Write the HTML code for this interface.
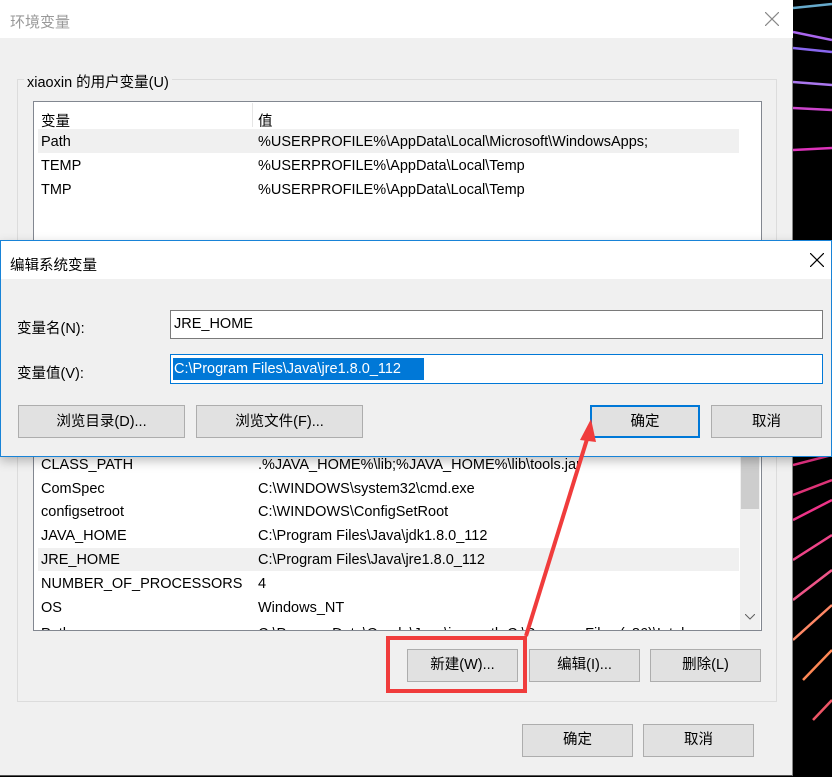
<!DOCTYPE html>
<html><head><meta charset="utf-8"><style>
*{margin:0;padding:0;box-sizing:border-box}
body{width:832px;height:777px;position:relative;overflow:hidden;background:#000;font-family:"Liberation Sans","Noto Sans CJK SC",sans-serif;font-size:14.5px;color:#000}
.a{position:absolute}
.btn{position:absolute;background:#e1e1e1;border:1px solid #adadad;text-align:center;font-size:14.5px}
.t{position:absolute;white-space:nowrap;margin-top:2px}
</style></head><body>
<svg class="a" style="left:793px;top:0" width="39" height="777">
<g fill="none" stroke-width="2.5">
<path d="M0 8 L39 4" stroke="#6ac"/>
<path d="M0 32 L39 40" stroke="#a6e"/>
<path d="M0 48 L39 52" stroke="#86e"/>
<path d="M0 82 L39 85" stroke="#a7e"/>
<path d="M0 108 L39 110" stroke="#c4c"/>
<path d="M0 150 L39 148" stroke="#d3b"/>
<path d="M0 465 L39 455" stroke="#e38"/>
<path d="M0 495 L39 480" stroke="#d37"/>
<path d="M0 520 L39 500" stroke="#e38"/>
<path d="M0 560 L39 535" stroke="#e48"/>
<path d="M0 600 L39 570" stroke="#e58"/>
<path d="M0 640 L39 605" stroke="#f86"/>
<path d="M10 680 L39 650" stroke="#f85"/>
<path d="M20 720 L39 700" stroke="#e56"/>
</g></svg>
<div class="a" style="left:0;top:0;width:793px;height:776px;background:#f0f0f0;border-right:1px solid #888;border-bottom:1px solid #555"></div>
<div class="a" style="left:0;top:0;width:793px;height:38px;background:#fff"></div>
<div class="t" style="left:10px;top:9px;color:#999;font-size:15px">环境变量</div>
<svg class="a" style="left:765px;top:12px" width="14" height="14"><path d="M0 0L14 14M14 0L0 14" stroke="#888" stroke-width="1.2"/></svg>
<div class="a" style="left:17px;top:79px;width:760px;height:623px;border:1px solid #dcdcdc"></div>
<div class="t" style="left:24px;top:69px;background:#f0f0f0;padding:0 3px">xiaoxin 的用户变量(U)</div>
<div class="a" style="left:33px;top:101px;width:729px;height:150px;background:#fff;border:1px solid #828790"></div>
<div class="a" style="left:252px;top:103px;width:1px;height:24px;background:#e5e5e5"></div>
<div class="t" style="left:41px;top:108px">变量</div>
<div class="t" style="left:258px;top:108px">值</div>
<div class="a" style="left:38px;top:129px;width:701px;height:24px;background:#f0f0f0"></div>
<div class="t" style="left:41px;top:132px">Path</div><div class="t" style="left:258px;top:132px">%USERPROFILE%\AppData\Local\Microsoft\WindowsApps;</div>
<div class="t" style="left:41px;top:156px">TEMP</div><div class="t" style="left:258px;top:156px">%USERPROFILE%\AppData\Local\Temp</div>
<div class="t" style="left:41px;top:180px">TMP</div><div class="t" style="left:258px;top:180px">%USERPROFILE%\AppData\Local\Temp</div>
<div class="a" style="left:33px;top:440px;width:729px;height:191px;background:#fff;border:1px solid #828790;border-top:none"></div>
<div class="a" style="left:740px;top:440px;width:20px;height:190px;background:#f0f0f0"></div>
<div class="a" style="left:741px;top:457px;width:18px;height:52px;background:#cdcdcd"></div>
<svg class="a" style="left:745px;top:614px" width="10" height="6"><path d="M0 0L5 5L10 0" stroke="#606060" fill="none"/></svg>
<div class="a" style="left:38px;top:548px;width:701px;height:23px;background:#f0f0f0"></div>
<div class="t" style="left:41px;top:455px">CLASS_PATH</div><div class="t" style="left:258px;top:455px">.%JAVA_HOME%\lib;%JAVA_HOME%\lib\tools.jar</div>
<div class="t" style="left:41px;top:479px">ComSpec</div><div class="t" style="left:258px;top:479px">C:\WINDOWS\system32\cmd.exe</div>
<div class="t" style="left:41px;top:502px">configsetroot</div><div class="t" style="left:258px;top:502px">C:\WINDOWS\ConfigSetRoot</div>
<div class="t" style="left:41px;top:526px">JAVA_HOME</div><div class="t" style="left:258px;top:526px">C:\Program Files\Java\jdk1.8.0_112</div>
<div class="t" style="left:41px;top:550px">JRE_HOME</div><div class="t" style="left:258px;top:550px">C:\Program Files\Java\jre1.8.0_112</div>
<div class="t" style="left:41px;top:574px">NUMBER_OF_PROCESSORS</div><div class="t" style="left:258px;top:574px">4</div>
<div class="t" style="left:41px;top:598px">OS</div><div class="t" style="left:258px;top:598px">Windows_NT</div>
<div class="a" style="left:34px;top:624px;width:705px;height:6px;overflow:hidden"><div class="t" style="left:7px;top:0">Path</div><div class="t" style="left:224px;top:0">C:\ProgramData\Oracle\Java\javapath;C:\Program Files (x86)\Intel</div></div>
<div class="btn" style="left:407px;top:649px;width:111px;height:33px;line-height:31px">新建(W)...</div>
<div class="btn" style="left:529px;top:649px;width:111px;height:33px;line-height:31px">编辑(I)...</div>
<div class="btn" style="left:650px;top:649px;width:111px;height:33px;line-height:31px">删除(L)</div>
<div class="a" style="left:386px;top:636px;width:141px;height:57px;border:4px solid #f03c3c"></div>
<div class="btn" style="left:522px;top:724px;width:111px;height:33px;line-height:31px">确定</div>
<div class="btn" style="left:643px;top:724px;width:111px;height:33px;line-height:31px">取消</div>
<div class="a" style="left:0;top:240px;width:832px;height:217px;background:#f0f0f0;border:1px solid #1883d7;box-shadow:0 4px 10px rgba(0,0,0,.25)"></div>
<div class="a" style="left:1px;top:241px;width:830px;height:38px;background:#fff"></div>
<div class="t" style="left:10px;top:252px">编辑系统变量</div>
<svg class="a" style="left:810px;top:253px" width="14" height="14"><path d="M0 0L14 14M14 0L0 14" stroke="#000" stroke-width="1.2"/></svg>
<div class="t" style="left:17px;top:315px">变量名(N):</div>
<div class="a" style="left:170px;top:310px;width:653px;height:29px;background:#fff;border:1px solid #7a7a7a"></div>
<div class="t" style="left:174px;top:314px">JRE_HOME</div>
<div class="t" style="left:17px;top:360px">变量值(V):</div>
<div class="a" style="left:170px;top:354px;width:653px;height:30px;background:#fff;border:1px solid #0078d7"></div>
<div class="a" style="left:173px;top:358px;width:251px;height:22px;background:#0078d7"></div>
<div class="t" style="left:174px;top:359px;color:#fff">C:\Program Files\Java\jre1.8.0_112</div>
<div class="btn" style="left:18px;top:405px;width:167px;height:33px;line-height:33px">浏览目录(D)...</div>
<div class="btn" style="left:196px;top:405px;width:167px;height:33px;line-height:33px">浏览文件(F)...</div>
<div class="btn" style="left:590px;top:405px;width:110px;height:33px;line-height:31px;border:2px solid #0078d7">确定</div>
<div class="btn" style="left:711px;top:405px;width:111px;height:33px;line-height:33px">取消</div>
<svg class="a" style="left:0;top:0" width="832" height="777">
<line x1="526" y1="636" x2="588" y2="436" stroke="#f03c3c" stroke-width="4"/>
<polygon points="591,419 580,440 596,442" fill="#f03c3c"/>
</svg>
</body></html>
